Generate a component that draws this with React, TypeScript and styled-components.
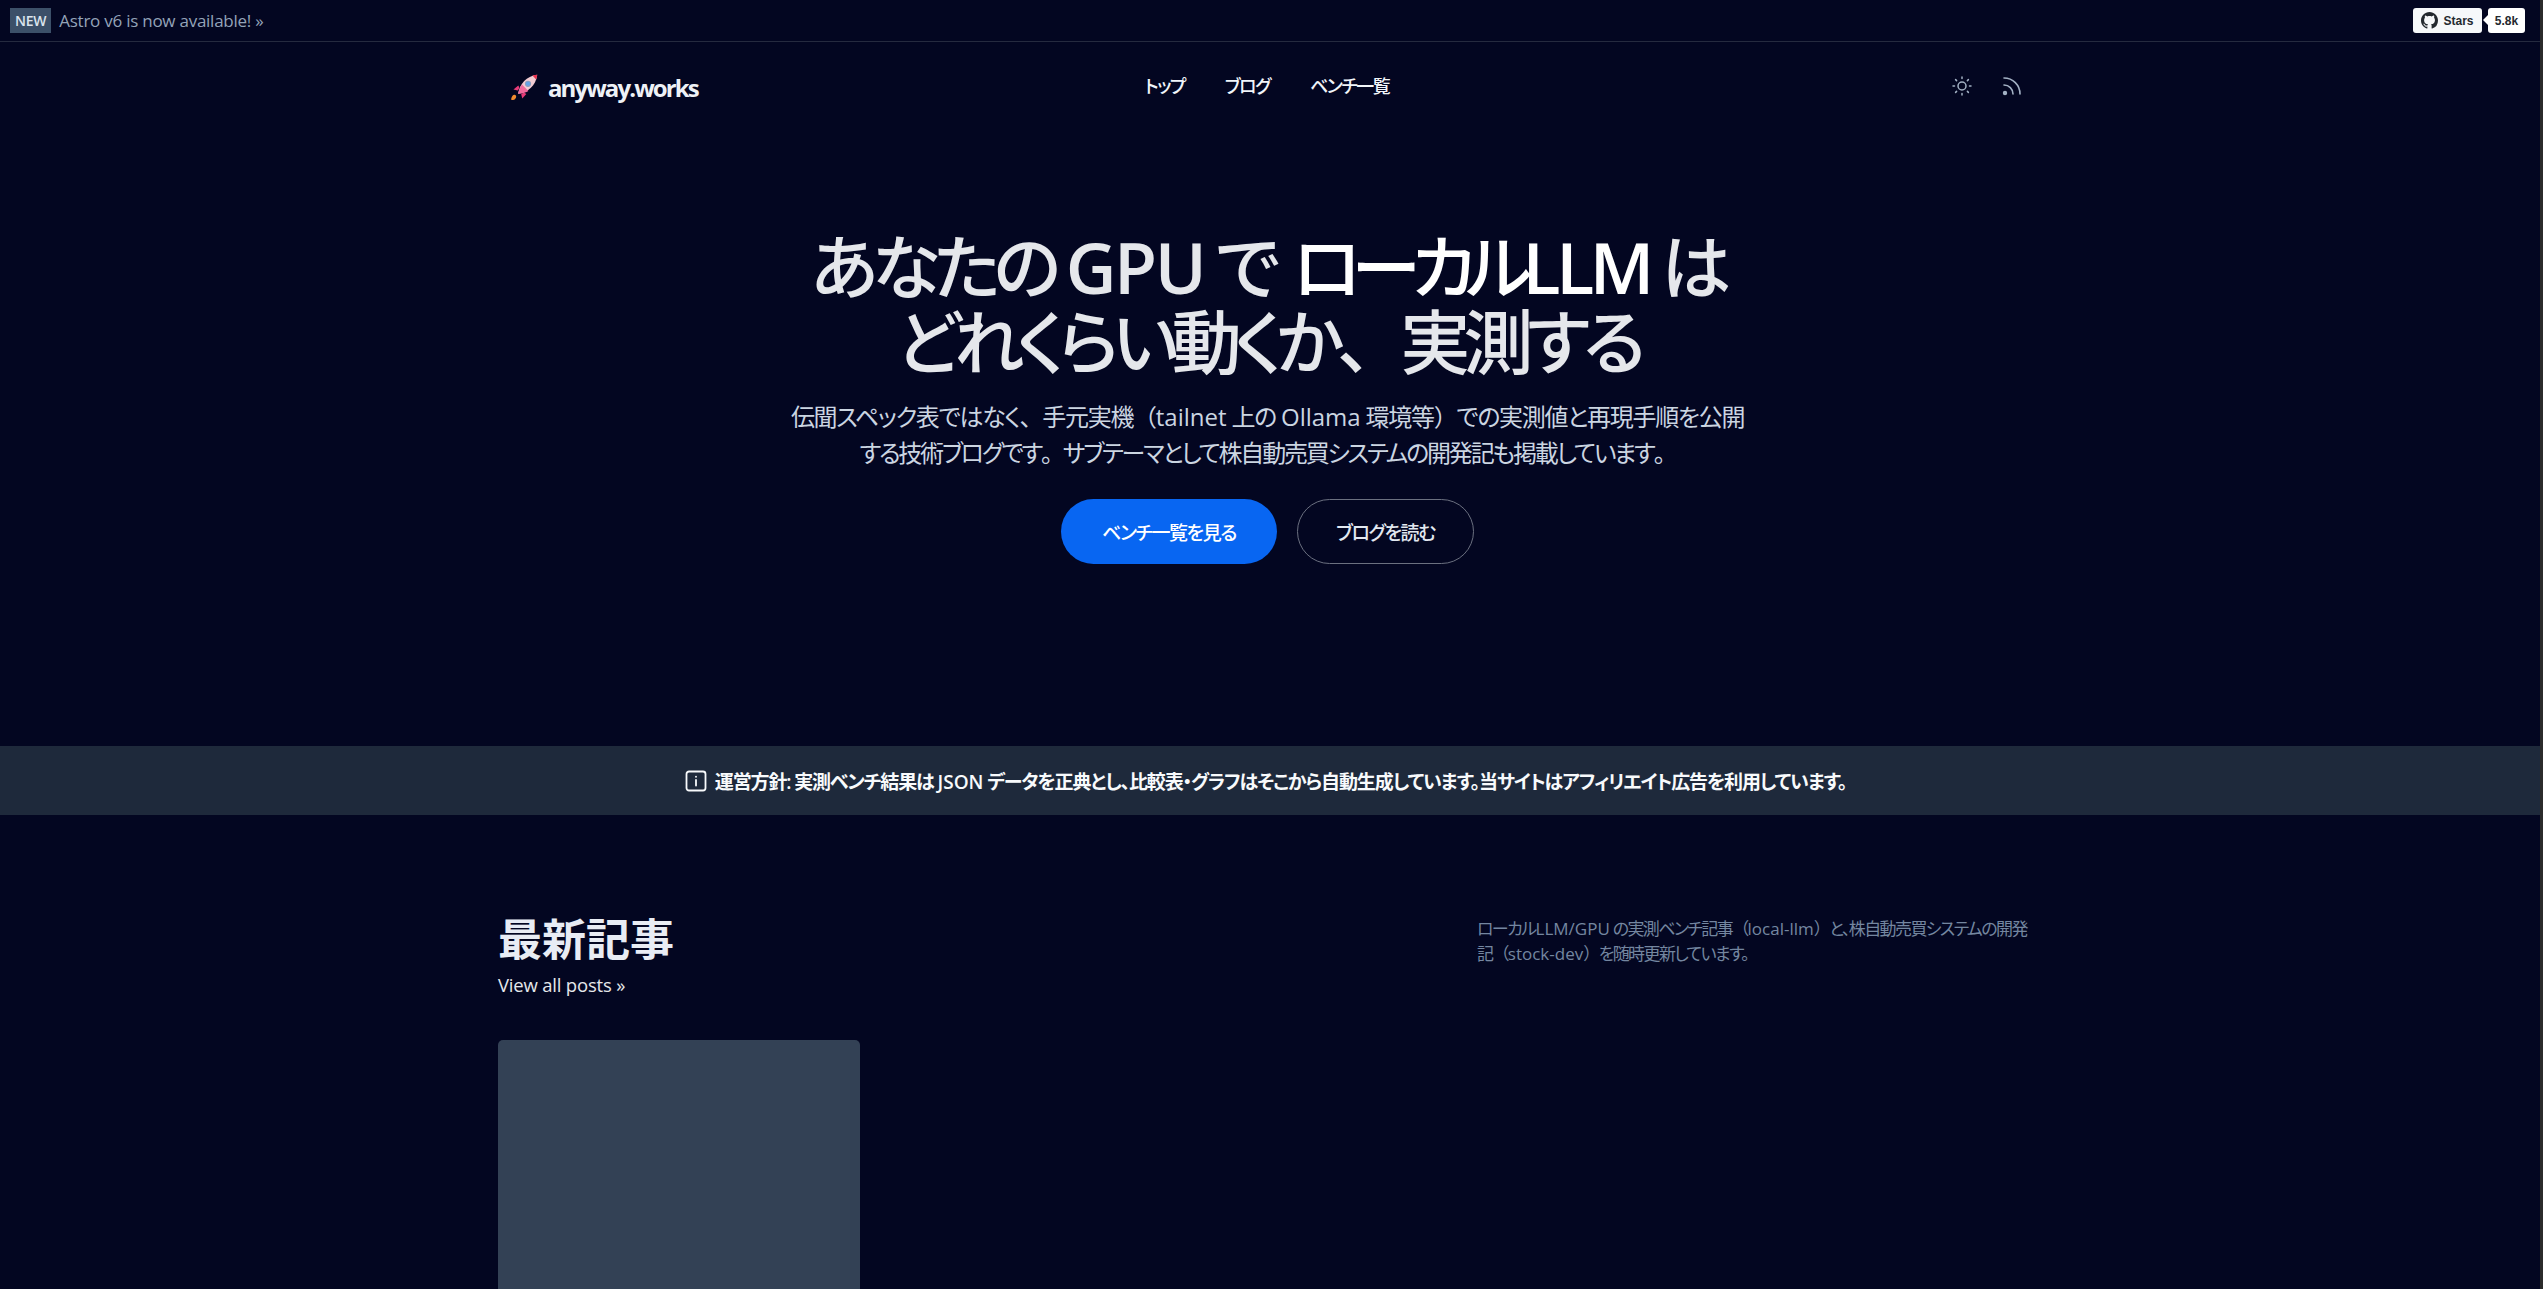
import React from 'react'
import styled, { createGlobalStyle } from 'styled-components'

const Global = createGlobalStyle`
  html, body { margin: 0; padding: 0; background: #030621; overflow: hidden; }
  body {
    font-family: "Open Sans", "Noto Sans CJK JP", sans-serif;
    font-feature-settings: "palt";
    color: #e5e7eb;
  }
  a { color: inherit; text-decoration: none; }
`

const Page = styled.div`
  height: 1289px;
  overflow: hidden;
  background: #030621;
  position: relative;

  /* sliver of the browser scrollbar on the right edge */
  &::after {
    content: "";
    position: absolute;
    top: 0;
    right: 0;
    bottom: 0;
    width: 3px;
    background: #2b2b2b;
  }
`

// latin runs keep their own tracking, the CJK around them is tightened
const Latin = styled.span<{ $track?: string; $weight?: number }>`
  letter-spacing: ${p => p.$track ?? '0'};
  font-weight: ${p => p.$weight ?? 'inherit'};
`

// full-width punctuation, as in the reference
const Punct = styled.span`
  font-feature-settings: normal;
`

const Announce = styled.div`
  height: 42px;
  box-sizing: border-box;
  border-bottom: 1px solid #252a3f;
  padding: 0 18px 0 10px;
  display: flex;
  align-items: center;
  justify-content: space-between;
`

const AnnounceLeft = styled.div`
  display: flex;
  align-items: center;
  gap: 8px;
  color: #94a3b8;
  font-size: 17px;
  letter-spacing: -0.25px;
`

const NewBadge = styled.span`
  background: #3c5069;
  color: #dbe4ee;
  font-size: 14px;
  font-weight: 600;
  height: 25px;
  padding: 0 5px;
  display: flex;
  align-items: center;
`

const Github = styled.div`
  display: flex;
  align-items: center;
  gap: 6px;
  font-family: "Liberation Sans", sans-serif;
  font-weight: 700;
  font-size: 12px;
  color: #24292f;
`

const GithubButton = styled.div`
  height: 25px;
  width: 69px;
  box-sizing: border-box;
  background: #f6f8fa;
  border-radius: 3px;
  display: flex;
  align-items: center;
  justify-content: center;
  gap: 5px;
`

const GithubCount = styled.div`
  height: 25px;
  width: 37px;
  background: #fff;
  border-radius: 3px;
  display: flex;
  align-items: center;
  justify-content: center;
  position: relative;

  &::before {
    content: "";
    position: absolute;
    left: -5px;
    top: 7px;
    border-style: solid;
    border-width: 5px 5px 5px 0;
    border-color: transparent #fff transparent transparent;
  }
`

const Header = styled.header`
  height: 90px;
  box-sizing: border-box;
  margin-left: 498px;
  width: 1528px;
  display: grid;
  grid-template-columns: 1fr auto 1fr;
  align-items: center;
  padding: 0 2px 0 12px;
`

const Logo = styled.a`
  display: flex;
  align-items: center;
  gap: 8px;
  font-size: 24px;
  font-weight: 700;
  letter-spacing: -1.9px;
  color: #eef1f6;
`

const Nav = styled.nav`
  display: flex;
  gap: 40px;
  font-size: 18px;
  font-weight: 500;
  letter-spacing: -1.5px;
  color: #f1f5f9;
  margin-top: -4px;
`

const HeaderIcons = styled.div`
  display: flex;
  justify-content: flex-end;
  align-items: center;
  gap: 26px;
  color: #a3b1c4;
  margin-top: -2px;
`

const Hero = styled.section`
  height: 614px;
  box-sizing: border-box;
  padding-top: 98px;
  display: flex;
  flex-direction: column;
  align-items: center;
  padding-right: 8px;
`

const Title = styled.h1`
  margin: 0;
  font-size: 70px;
  line-height: 75px;
  font-weight: 500;
  letter-spacing: -6.8px;
  color: #e5e7eb;
  text-align: center;
`

const TitleAccent = styled.span`
  color: #fff;
  letter-spacing: -9.5px;
  margin-left: 8px;
`

const Lead = styled.p`
  margin: 19px 0 0;
  font-size: 24px;
  line-height: 36px;
  letter-spacing: -1.3px;
  color: #cbd5e1;
  text-align: center;
  font-weight: 400;
`

const LeadTight = styled.span`
  letter-spacing: -2.2px;
`

const Buttons = styled.div`
  display: flex;
  gap: 20px;
  margin-top: 28px;
`

const Button = styled.a<{ $primary?: boolean }>`
  height: 65px;
  box-sizing: border-box;
  width: ${p => (p.$primary ? '216px' : '177px')};
  border-radius: 33px;
  display: flex;
  align-items: center;
  justify-content: center;
  font-size: 19px;
  font-weight: 500;
  letter-spacing: -1.4px;
  color: ${p => (p.$primary ? '#fff' : '#e2e8f0')};
  background: ${p => (p.$primary ? '#0866f2' : 'transparent')};
  border: ${p => (p.$primary ? 'none' : '1px solid #6b7080')};
`

const Notice = styled.div`
  height: 69px;
  background: #1e293b;
  display: flex;
  align-items: center;
  justify-content: center;
  gap: 8px;
  font-size: 19px;
  font-weight: 600;
  letter-spacing: -1.13px;
  color: #f8fafc;
  padding-right: 12px;
`

const Latest = styled.section`
  margin-left: 498px;
  width: 1528px;
  padding-top: 96px;
`

const LatestHead = styled.div`
  display: flex;
  justify-content: space-between;
  height: 129px;
`

const LatestTitle = styled.h2`
  margin: 0;
  font-size: 44px;
  line-height: 56px;
  font-weight: 700;
  color: #e8ecf4;
`

const ViewAll = styled.a`
  display: block;
  margin-top: 3px;
  font-size: 18.5px;
  line-height: 30px;
  letter-spacing: -0.2px;
  color: #e5e7eb;
`

const LatestNote = styled.p`
  margin: 5px 0 0;
  width: 549px;
  white-space: nowrap;
  font-size: 17px;
  line-height: 25px;
  letter-spacing: -1.6px;
  color: #7486a0;
`

const Card = styled.div`
  width: 362px;
  height: 400px;
  background: #334155;
  border-radius: 5px;
`

function Rocket() {
  return (
    <svg width="30" height="30" viewBox="0 0 26 26">
      <path d="M1 23.5c.4-2.6 2-4.4 3.6-3.6 1.5.9.6 3.4-1.2 4.2-1 .4-2.6.4-2.4-.6z" fill="#f08a2e" />
      <path d="M7.2 11.6 3 15.2l3.8.9 1.4-2.4z" fill="#e83a78" />
      <path d="M14.2 19 10.6 23l-.9-3.8 2.4-1.4z" fill="#e83a78" />
      <path d="M7 18.9C8.6 10.2 14 3.8 23.6 2.4 22.3 12 15.8 17.4 7 18.9z" fill="#f2ccd2" />
      <path d="M7 18.9c.9-4 2.2-6.3 3.4-8l5.6 5.6c-1.8 1.2-4.6 2.3-9 2.4z" fill="#f06a9c" />
      <path d="M19.4 3c1.4-.4 2.7-.6 4.2-.6-.2 1.5-.4 2.8-.9 4.2z" fill="#e8324f" />
      <circle cx="15.6" cy="10.2" r="2.7" fill="#8a9fc0" />
      <circle cx="15.6" cy="10.2" r="1.8" fill="#63a4e8" />
    </svg>
  )
}

function GithubMark() {
  return (
    <svg width="17" height="17" viewBox="0 0 16 16" fill="#24292f">
      <path d="M8 0C3.58 0 0 3.58 0 8c0 3.54 2.29 6.53 5.47 7.59.4.07.55-.17.55-.38 0-.19-.01-.82-.01-1.49-2.01.37-2.53-.49-2.69-.94-.09-.23-.48-.94-.82-1.13-.28-.15-.68-.52-.01-.53.63-.01 1.08.58 1.23.82.72 1.21 1.87.87 2.33.66.07-.52.28-.87.51-1.07-1.78-.2-3.64-.89-3.64-3.95 0-.87.31-1.59.82-2.15-.08-.2-.36-1.02.08-2.12 0 0 .67-.21 2.2.82.64-.18 1.32-.27 2-.27s1.36.09 2 .27c1.53-1.04 2.2-.82 2.2-.82.44 1.1.16 1.92.08 2.12.51.56.82 1.27.82 2.15 0 3.07-1.87 3.75-3.65 3.95.29.25.54.73.54 1.48 0 1.07-.01 1.93-.01 2.2 0 .21.15.46.55.38A8.01 8.01 0 0 0 16 8c0-4.42-3.58-8-8-8z" />
    </svg>
  )
}

function SunIcon() {
  return (
    <svg width="24" height="24" viewBox="0 0 24 24" fill="none" stroke="currentColor" strokeWidth="1.5" strokeLinecap="round">
      <circle cx="12" cy="12" r="4" />
      <path d="M12 3v1.5M12 19.5V21M3 12h1.5M19.5 12H21M5.6 5.6l1 1M17.4 17.4l1 1M5.6 18.4l1-1M17.4 6.6l1-1" />
    </svg>
  )
}

function RssIcon() {
  return (
    <svg width="24" height="24" viewBox="0 0 24 24" fill="none" stroke="currentColor" strokeWidth="1.6" strokeLinecap="round">
      <path d="M4 11a9 9 0 0 1 9 9" />
      <path d="M4 4a16 16 0 0 1 16 16" />
      <circle cx="5" cy="19" r="1.4" fill="currentColor" />
    </svg>
  )
}

function InfoIcon() {
  return (
    <svg width="22" height="22" viewBox="0 0 22 22" fill="none" stroke="currentColor" strokeWidth="1.8" strokeLinecap="round">
      <rect x="1.5" y="1.5" width="19" height="19" rx="2.5" />
      <path d="M11 10v5.5" />
      <path d="M11 6.6v.2" />
    </svg>
  )
}

export default function App() {
  return (
    <Page>
      <Global />
      <Announce>
        <AnnounceLeft>
          <NewBadge>NEW</NewBadge>
          <a href="#">Astro v6 is now available! »</a>
        </AnnounceLeft>
        <Github>
          <GithubButton><GithubMark />Stars</GithubButton>
          <GithubCount>5.8k</GithubCount>
        </Github>
      </Announce>
      <Header>
        <Logo href="#"><Rocket />anyway.works</Logo>
        <Nav>
          <a href="#">トップ</a>
          <a href="#">ブログ</a>
          <a href="#">ベンチ一覧</a>
        </Nav>
        <HeaderIcons><SunIcon /><RssIcon /></HeaderIcons>
      </Header>
      <Hero>
        <Title>
          あなたの <Latin $track="-2.4px" $weight={600}>GPU</Latin> で <TitleAccent>ローカル<Latin $track="-4.4px" $weight={600}>LLM</Latin></TitleAccent> は<br />
          どれくらい動くか<Punct>、</Punct>実測する
        </Title>
        <Lead>
          伝聞スペック表ではなく<Punct>、</Punct>手元実機<Punct>（</Punct><Latin>tailnet</Latin> 上の <Latin>Ollama</Latin> 環境等<Punct>）</Punct>での実測値と再現手順を公開<br />
          <LeadTight>する技術ブログです<Punct>。</Punct>サブテーマとして株自動売買システムの開発記も掲載しています<Punct>。</Punct></LeadTight>
        </Lead>
        <Buttons>
          <Button $primary href="#">ベンチ一覧を見る</Button>
          <Button href="#">ブログを読む</Button>
        </Buttons>
      </Hero>
      <Notice>
        <InfoIcon />
        <span>運営方針: 実測ベンチ結果は <Latin>JSON</Latin> データを正典とし、比較表・グラフはそこから自動生成しています。当サイトはアフィリエイト広告を利用しています。</span>
      </Notice>
      <Latest>
        <LatestHead>
          <div>
            <LatestTitle>最新記事</LatestTitle>
            <ViewAll href="#">View all posts »</ViewAll>
          </div>
          <LatestNote>ローカル<Latin>LLM/GPU</Latin> の実測ベンチ記事<Punct>（</Punct><Latin>local-llm</Latin><Punct>）</Punct>と、株自動売買システムの開発<br />記<Punct>（</Punct><Latin>stock-dev</Latin><Punct>）</Punct>を随時更新しています。</LatestNote>
        </LatestHead>
        <Card />
      </Latest>
    </Page>
  )
}
